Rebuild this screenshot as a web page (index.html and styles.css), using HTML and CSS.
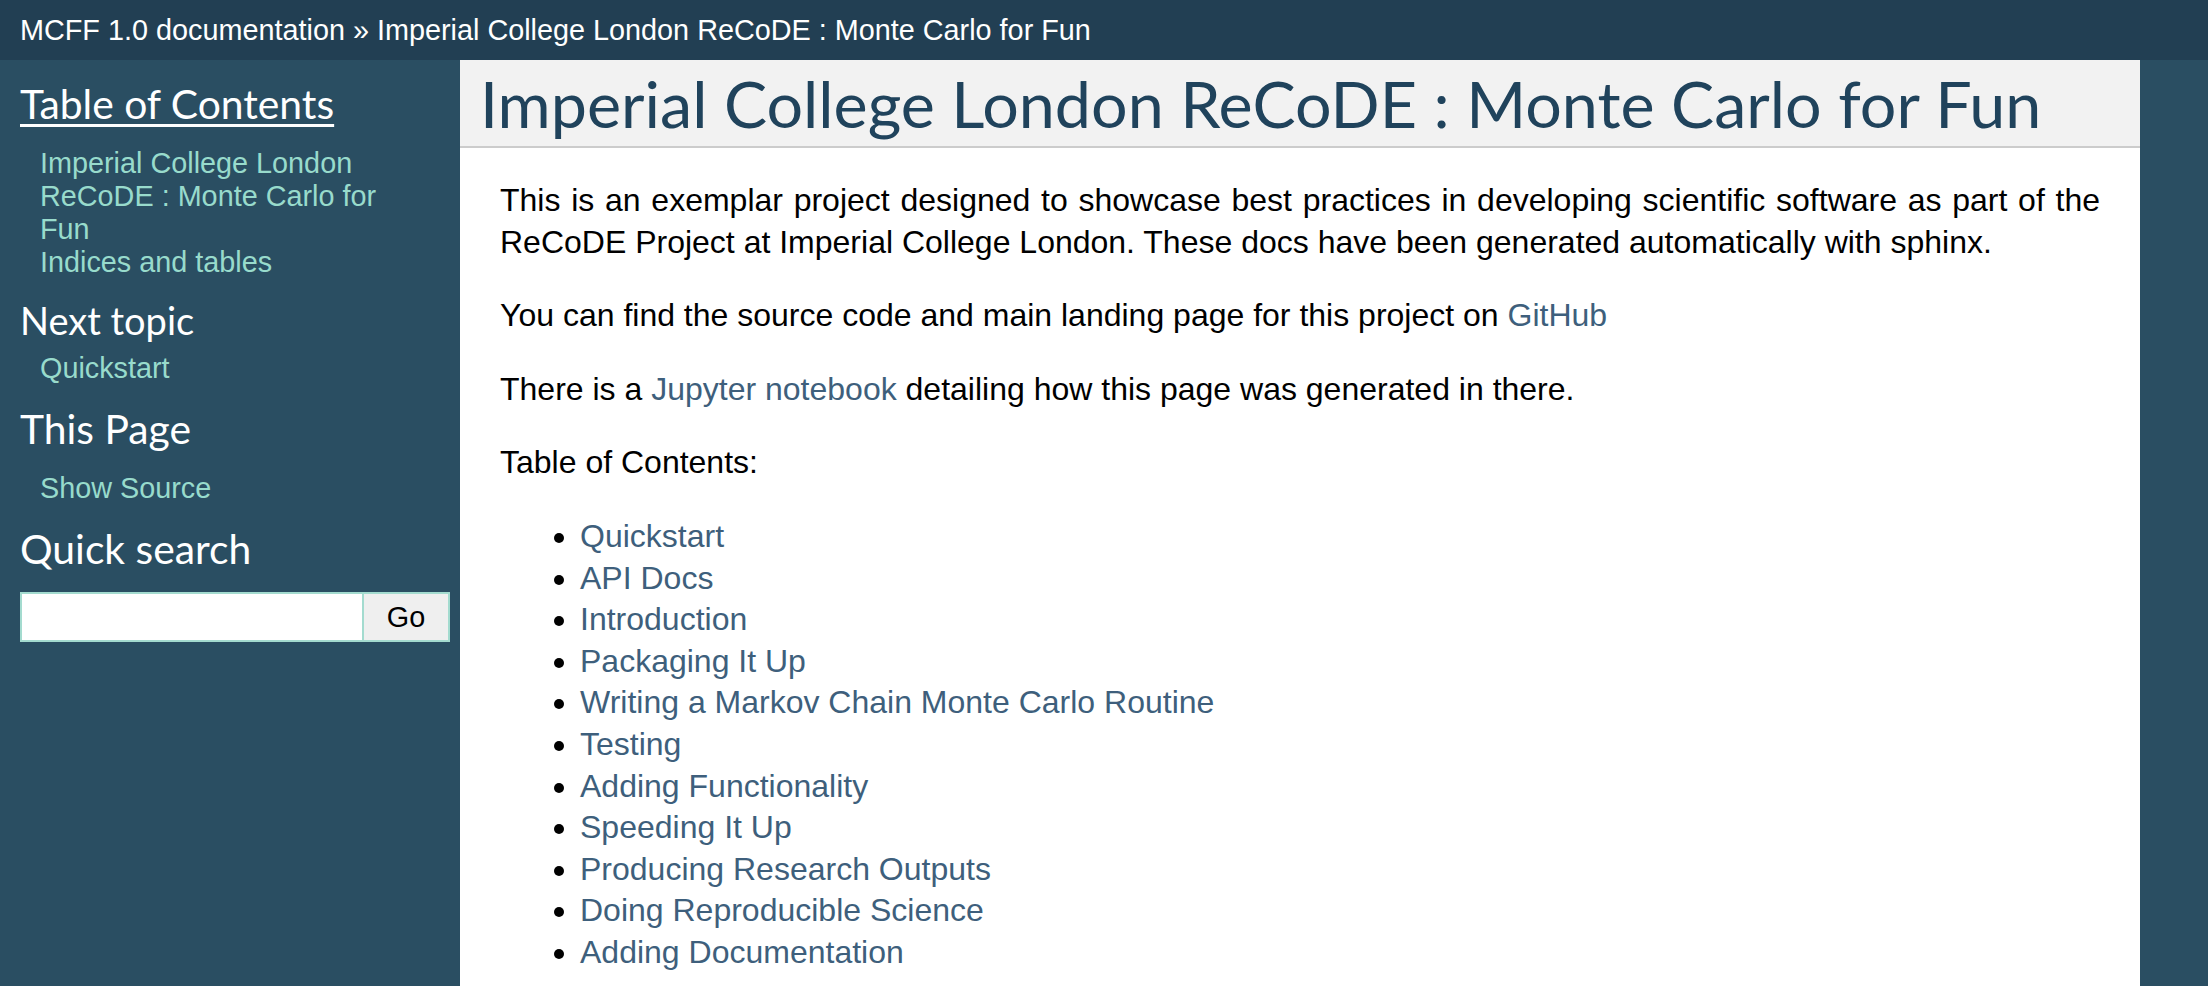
FILE: index.html
```html
<!DOCTYPE html>
<html lang="en">
<head>
<meta charset="utf-8">
<title>Imperial College London ReCoDE : Monte Carlo for Fun — MCFF 1.0 documentation</title>
<link rel="stylesheet" href="styles.css">
</head>
<body>
<div class="related">
  <ul>
    <li class="nav-item"><a href="#">MCFF 1.0 documentation</a> &#187;</li>
    <li class="nav-item"><a href="#">Imperial College London ReCoDE : Monte Carlo for Fun</a></li>
  </ul>
</div>
<div class="document">
  <div class="sphinxsidebar">
    <div class="sidebarwrapper">
      <h3 class="side-h3"><a href="#" class="side-h3-link">Table of Contents</a></h3>
      <ul class="side-list">
        <li><a href="#">Imperial College London ReCoDE : Monte Carlo for Fun</a></li>
        <li><a href="#">Indices and tables</a></li>
      </ul>
      <h4 class="side-h4">Next topic</h4>
      <p class="topless"><a href="#">Quickstart</a></p>
      <h3 class="side-h3">This Page</h3>
      <ul class="side-list">
        <li><a href="#">Show Source</a></li>
      </ul>
      <h3 class="side-h3">Quick search</h3>
      <form class="search">
        <input type="text" class="search-input" aria-label="search">
        <input type="submit" class="search-go" value="Go">
      </form>
    </div>
  </div>
  <div class="body">
    <h1 class="title">Imperial College London ReCoDE : Monte Carlo for Fun</h1>
    <p class="para">This is an exemplar project designed to showcase best practices in developing scientific software as part of the ReCoDE Project at Imperial College London. These docs have been generated automatically with sphinx.</p>
    <p class="para">You can find the source code and main landing page for this project on <a href="#">GitHub</a></p>
    <p class="para">There is a <a href="#">Jupyter notebook</a> detailing how this page was generated in there.</p>
    <p class="para">Table of Contents:</p>
    <ul class="toc">
      <li><a href="#">Quickstart</a></li>
      <li><a href="#">API Docs</a></li>
      <li><a href="#">Introduction</a></li>
      <li><a href="#">Packaging It Up</a></li>
      <li><a href="#">Writing a Markov Chain Monte Carlo Routine</a></li>
      <li><a href="#">Testing</a></li>
      <li><a href="#">Adding Functionality</a></li>
      <li><a href="#">Speeding It Up</a></li>
      <li><a href="#">Producing Research Outputs</a></li>
      <li><a href="#">Doing Reproducible Science</a></li>
      <li><a href="#">Adding Documentation</a></li>
    </ul>
  </div>
</div>
</body>
</html>
```
FILE: styles.css
```css
html, body {
  margin: 0;
  padding: 0;
}
body {
  font-family: "Liberation Sans", Arial, sans-serif;
  font-size: 32px;
  background: #2a4e62;
  color: #000;
  overflow: hidden;
}
a {
  color: #3e5f7c;
  text-decoration: none;
}
.related {
  background: #223f53;
  color: #fff;
  font-size: 28.8px;
  line-height: 60px;
  height: 60px;
}
.related ul {
  margin: 0;
  padding: 0 0 0 20px;
  list-style: none;
}
.related li {
  display: inline;
}
.related a {
  color: #fff;
}
.document {
  display: flex;
  align-items: flex-start;
}
.sphinxsidebar {
  flex: 0 0 460px;
  width: 460px;
  font-size: 28.8px;
  color: #fff;
}
.sidebarwrapper {
  padding: 20px 10px 0 20px;
}
.side-h3 {
  font-family: Lato, "Liberation Sans", sans-serif;
  font-size: 40.8px;
  font-weight: normal;
  color: #fff;
  margin: 0;
  padding: 0;
  line-height: 47px;
}
.side-h3-link {
  color: #fff;
  text-decoration: underline;
  text-decoration-thickness: 3px;
  text-underline-offset: 5px;
}
.side-h4 {
  font-family: Lato, "Liberation Sans", sans-serif;
  font-size: 38px;
  font-weight: normal;
  color: #fff;
  margin: 10px 0 0 0;
  padding: 0;
  line-height: 43px;
}
.side-list {
  margin: 20px;
  padding: 0;
  list-style: none;
  line-height: 33px;
}
.side-list a, .topless a {
  color: #98dbcc;
}
.topless {
  margin: 10px 20px 20px 20px;
  line-height: 33px;
}
.search {
  margin: 20px 0 0 0;
  display: flex;
}
.search-input {
  width: 80%;
  box-sizing: border-box;
  border: 2px solid #a3dbcf;
  background: #fff;
  font-family: "Liberation Sans", Arial, sans-serif;
  font-size: 28.8px;
  padding: 6px;
  height: 50px;
  margin: 0;
  outline: none;
}
.search-go {
  width: 20%;
  box-sizing: border-box;
  border: 2px solid #a3dbcf;
  border-left: none;
  background: #efefef;
  color: #000;
  font-family: "Liberation Sans", Arial, sans-serif;
  font-size: 28.8px;
  padding: 6px;
  height: 50px;
  margin: 0;
}
.body {
  flex: 0 1 1600px;
  max-width: 1600px;
  background: #fff;
  padding: 0 40px 60px 40px;
  min-height: 1000px;
}
.title {
  font-family: Lato, "Liberation Sans", sans-serif;
  font-size: 64.6px;
  font-weight: normal;
  color: #20435c;
  background: #f2f2f2;
  border-bottom: 2px solid #cccccc;
  margin: 0 -40px 20px -40px;
  padding: 6px 0 6px 20px;
  line-height: 74px;
}
.para {
  margin: 32px 0;
  line-height: 41.6px;
  text-align: justify;
}
.toc {
  margin: 32px 0;
  padding-left: 80px;
  line-height: 41.6px;
}
```
